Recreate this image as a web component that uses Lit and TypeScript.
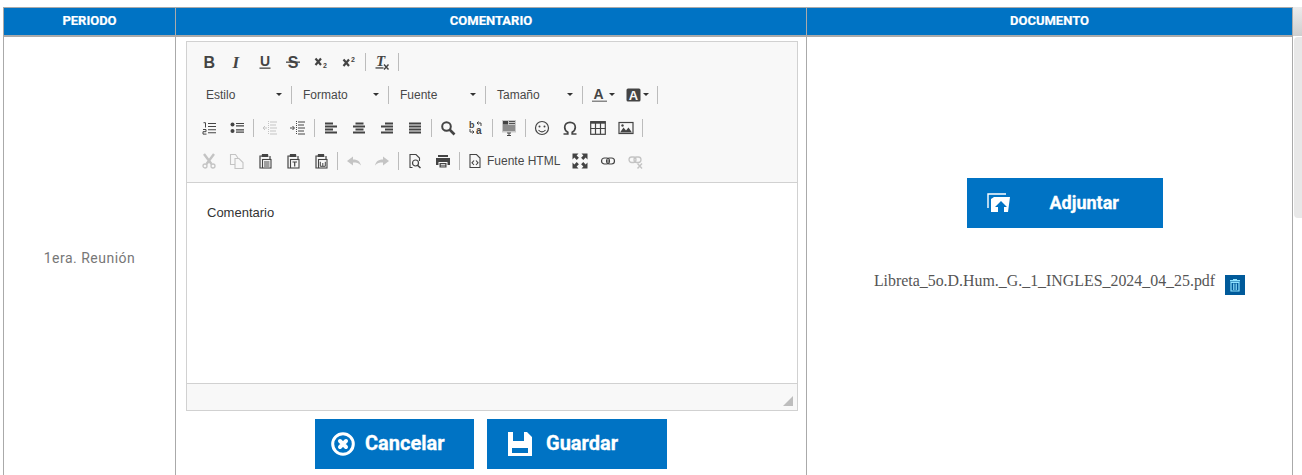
import { LitElement, html, css, svg } from "lit";
import { customElement } from "lit/decorators.js";

const ic = (body: unknown, cls = "") => html`<svg class="ic ${cls}" viewBox="0 0 16 16" width="16" height="16">${body}</svg>`;
const D = "#444";
const L = "#c4c4c4";

const I: Record<string, unknown> = {
  bold: svg`<text x="2.500" y="13.500" font-family="Liberation Sans" font-weight="700" font-size="16" fill="${D}">B</text>`,
  italic: svg`<text x="3.500" y="13.500" font-family="Liberation Serif" font-style="italic" font-weight="700" font-size="17" fill="${D}">I</text>`,
  underline: svg`<text x="3" y="11.500" font-family="Liberation Sans" font-weight="700" font-size="14" fill="${D}">U</text><rect x="2.500" y="13.500" width="11" height="1.300" fill="${D}"/>`,
  strike: svg`<text x="2.800" y="13.500" font-family="Liberation Sans" font-weight="700" font-size="16" fill="${D}">S</text><rect x="1" y="7.500" width="14" height="1.300" fill="${D}"/>`,
  sub: svg`<path d="M2.500 4.500l5.500 6.500M8 4.500l-5.500 6.500" stroke="${D}" stroke-width="2.200"/><text x="10" y="13.500" font-family="Liberation Sans" font-size="7" font-weight="700" fill="${D}">2</text>`,
  sup: svg`<path d="M2.500 5.500l5.500 6.500M8 5.500l-5.500 6.500" stroke="${D}" stroke-width="2.200"/><text x="10" y="7.500" font-family="Liberation Sans" font-size="7" font-weight="700" fill="${D}">2</text>`,
  clear: svg`<text x="2" y="12" font-family="Liberation Serif" font-style="italic" font-weight="700" font-size="15" fill="${D}">T</text><rect x="1.500" y="13.300" width="8" height="1.300" fill="${D}"/><path d="M10 10.500l4.500 5M14.500 10.500l-4.500 5" stroke="${D}" stroke-width="1.400"/>`,
  ol: svg`<path d="M2.500 2.700h2v4.800M2 9.500h3v2.200H2v2.400h3.500" fill="none" stroke="${D}" stroke-width="1"/><path d="M7 3.500h8M7 6.500h8M7 9.800h8M7 12.800h8" stroke="${D}" stroke-width="1.100"/>`,
  ul: svg`<circle cx="3.500" cy="4.500" r="2" fill="${D}"/><circle cx="3.500" cy="11" r="2" fill="${D}"/><path d="M7 3.500h8M7 5.800h8M7 9.800h8M7 12.200h8" stroke="${D}" stroke-width="1.200"/>`,
  outdent: svg`<path d="M6.500 1v14" stroke="${L}" stroke-dasharray="1 1"/><path d="M8 2h7M8 5h6M8 8h7M8 11h6M8 14h7" stroke="${L}"/><path d="M1 8h4M3 6L1 8l2 2" fill="none" stroke="${L}"/>`,
  indent: svg`<path d="M6.500 1v14" stroke="${D}" stroke-dasharray="1 1"/><path d="M8 2h7M8 5h6M8 8h7M8 11h6M8 14h7" stroke="${D}"/><path d="M0 8h4M2.500 6l2 2-2 2" fill="none" stroke="${D}"/>`,
  al: svg`<path d="M2 3.500h8M2 6.500h12M2 9.500h8M2 12.500h12" stroke="${D}" stroke-width="1.800"/>`,
  ac: svg`<path d="M4.500 3.500h8M2 6.500h12M4.500 9.500h8M2 12.500h12" stroke="${D}" stroke-width="1.800"/>`,
  ar: svg`<path d="M6 3.500h8M2 6.500h12M6 9.500h8M2 12.500h12" stroke="${D}" stroke-width="1.800"/>`,
  aj: svg`<path d="M2 3.500h12M2 6.500h12M2 9.500h12M2 12.500h12" stroke="${D}" stroke-width="1.800"/>`,
  find: svg`<circle cx="6.500" cy="6.500" r="4.300" fill="none" stroke="${D}" stroke-width="2"/><path d="M9.500 9.500l5 5" stroke="${D}" stroke-width="2.600"/>`,
  replace: svg`<text x="1" y="7.500" font-family="Liberation Sans" font-weight="700" font-size="9" fill="${D}">b</text><text x="8" y="14" font-family="Liberation Sans" font-weight="700" font-size="10" fill="${D}">a</text><path d="M13 6V3H9M10.500 1.500L9 3l1.500 1.500M2 9v3h4M4.500 10.500L6 12l-1.500 1.500" fill="none" stroke="${D}"/>`,
  block: svg`<rect x="1" y="0" width="14" height="12.500" fill="#c8c8c8"/><path d="M2 1h5v3.500H2z" fill="${D}"/><path d="M8 1.500h6M8 3.500h6M2 6h12M2 8h12M2 10h12" stroke="${D}" stroke-width=".9"/><path d="M6 13h4M8 13v2.500M6 15.500h4" stroke="${D}"/>`,
  smile: svg`<circle cx="8" cy="8" r="6.500" fill="none" stroke="${D}" stroke-width="1.200"/><circle cx="5.500" cy="6.500" r="1" fill="${D}"/><circle cx="10.500" cy="6.500" r="1" fill="${D}"/><path d="M4.500 10c2 2.500 5 2.500 7 0" fill="none" stroke="${D}" stroke-width="1.100"/>`,
  omega: svg`<path d="M1.500 14h4.300v-1.700C3.800 11.200 2.700 9.400 2.700 7.300 2.700 4.300 4.900 2.300 8 2.300s5.300 2 5.300 5c0 2.100-1.100 3.900-3.100 5V14h4.300" fill="none" stroke="${D}" stroke-width="1.700"/>`,
  table: svg`<rect x=".7" y="1.700" width="14.600" height="12.600" fill="none" stroke="${D}" stroke-width="1.200"/><path d="M.7 2.500h14.600" stroke="${D}" stroke-width="2.400"/><path d="M.7 8.500h14.600M5.500 3v11M10.500 3v11" stroke="${D}" stroke-width="1.200"/>`,
  image: svg`<rect x="1" y="2.500" width="14" height="11" fill="none" stroke="${D}" stroke-width="1.200"/><path d="M2 12.500l3.500-5 2.500 3 2.500-3 3.500 5z" fill="${D}"/><circle cx="4.500" cy="5.500" r="1.200" fill="${D}"/>`,
  cut: svg`<path d="M3 1l7.500 10M13 1L5.500 11" stroke="${L}" stroke-width="2.400"/><circle cx="4" cy="13" r="2" fill="none" stroke="${L}" stroke-width="1.300"/><circle cx="12" cy="13" r="2" fill="none" stroke="${L}" stroke-width="1.300"/>`,
  copy: svg`<path d="M6 11.500H1.500v-10h5l2.500 3.500M6 5.500h4l4 4v6H6z" fill="#f8f8f8" stroke="${L}" stroke-width="1.100"/>`,
  paste: svg`<path d="M5 3H3v12h2" fill="none" stroke="${D}" stroke-width="1.200"/><path d="M5 1h6l.5 3h-7z" fill="${D}"/><path d="M13 3v3" stroke="${D}" stroke-width="1.200"/><rect x="5.500" y="6.500" width="8.500" height="8.500" fill="none" stroke="${D}" stroke-width="1.100"/><path d="M7 9h5.500M7 11h5.500M7 13h5.500" stroke="${D}"/>`,
  pasteT: svg`<path d="M5 3H3v12h2" fill="none" stroke="${D}" stroke-width="1.200"/><path d="M5 1h6l.5 3h-7z" fill="${D}"/><path d="M13 3v3" stroke="${D}" stroke-width="1.200"/><rect x="5.500" y="6.500" width="8.500" height="8.500" fill="none" stroke="${D}" stroke-width="1.100"/><path d="M7.500 9h4.500M9.700 9v4.500" stroke="${D}" stroke-width="1.200"/>`,
  pasteW: svg`<path d="M5 3H3v12h2" fill="none" stroke="${D}" stroke-width="1.200"/><path d="M5 1h6l.5 3h-7z" fill="${D}"/><path d="M13 3v3" stroke="${D}" stroke-width="1.200"/><rect x="5.500" y="6.500" width="8.500" height="8.500" fill="none" stroke="${D}" stroke-width="1.100"/><path d="M7.300 8.800v4.500h5V8.800M9.800 10v3" fill="none" stroke="${D}"/>`,
  undo: svg`<path d="M1 8L7 3.500v3c4 0 7 1.500 8 6-2-2.500-4.500-3-8-3v3z" fill="${L}"/>`,
  redo: svg`<path d="M15 8L9 3.500v3c-4 0-7 1.500-8 6 2-2.500 4.500-3 8-3v3z" fill="${L}"/>`,
  preview: svg`<path d="M5.500 14.500H3V1.500h6l3.500 3.500v3" fill="none" stroke="${D}" stroke-width="1.100"/><circle cx="8.500" cy="10" r="3" fill="none" stroke="${D}" stroke-width="1.200"/><path d="M10.500 12.300l3 2.700" stroke="${D}" stroke-width="1.500"/>`,
  print: svg`<path d="M3 2h10v2H3z" fill="${D}"/><path d="M1 5h14v7h-2.500V9h-9v3H1z" fill="${D}"/><path d="M4.500 10h7v4.500h-7z" fill="${D}"/><path d="M5.800 11.500h4.500M5.800 13h4.500" stroke="#f8f8f8" stroke-width=".8"/>`,
  source: svg`<path d="M3 1.500h6.500L13 5v9.500H3z" fill="none" stroke="${D}" stroke-width="1.100"/><path d="M7 7.500L5 9.800 7 12M9 7.500l2 2.300L9 12" fill="none" stroke="${D}" stroke-width="1.100"/>`,
  max: svg`<path d="M.5.500h6L4.600 2.400l2.300 2.300-2.200 2.200-2.300-2.300L.5 6.500zM15.500.500v6l-1.900-1.900-2.300 2.300-2.200-2.200 2.300-2.300L9.500.500zM.5 15.500v-6l1.900 1.900 2.300-2.300 2.200 2.200-2.300 2.300 1.900 1.900zM15.500 15.500h-6l1.900-1.900-2.300-2.300 2.200-2.200 2.300 2.300 1.900-1.900z" fill="${D}"/>`,
  link: svg`<rect x="1.500" y="5" width="8" height="6" rx="3" fill="none" stroke="${D}" stroke-width="1.200"/><rect x="6.500" y="5" width="8" height="6" rx="3" fill="none" stroke="${D}" stroke-width="1.200"/><path d="M6 8h4" stroke="${D}" stroke-width=".9"/>`,
  unlink: svg`<rect x="1" y="4" width="7" height="5.500" rx="2.700" fill="none" stroke="${L}" stroke-width="1.300"/><rect x="6" y="4" width="7" height="5.500" rx="2.700" fill="none" stroke="${L}" stroke-width="1.300"/><path d="M9.500 10.500l4.500 5M14 10.500l-4.500 5" stroke="${L}" stroke-width="1.400"/>`,
};

const sep = html`<span class="sep"></span>`;
const btn = (n: string) => html`<span class="btn">${ic(I[n])}</span>`;
const combo = (label: string) => html`<span class="combo"><span>${label}</span><i class="caret"></i></span>`;

@customElement("app-root")
export class AppRoot extends LitElement {
  static styles = css`
    :host { display: block; width: 1302px; height: 475px; overflow: hidden; position: relative; background: #fff; font-family: "Liberation Sans", Arial, sans-serif; }
    .page { padding: 7px 9px 0 3px; box-sizing: border-box; height: 475px; }
    .grid { display: grid; grid-template-columns: 172px 631px 486px; border-left: 1px solid #aaa; border-top: 1px solid #aaa; height: 468px; grid-template-rows: 29px 1fr; box-sizing: border-box; width: 1290px; }
    .th { background: #0073c4; color: #fff; font-family: Roboto, sans-serif; font-weight: 700; font-size: 13px; text-align: center; line-height: 26px; border-right: 1px solid #aaa; border-bottom: 2px solid #aaa; box-sizing: border-box; -webkit-text-stroke: .2px #fff; }
    .td { border-right: 1px solid #aaa; box-sizing: border-box; }
    .periodo { display: flex; align-items: center; justify-content: center; color: #777; font-family: Roboto, sans-serif; font-size: 14px; letter-spacing: .5px; height: 442px; }
    .mid { padding: 4px 8px 0 10px; }
    .ed { border: 1px solid #d1d1d1; width: 612px; height: 370px; box-sizing: border-box; display: flex; flex-direction: column; background: #fff; }
    .tb { height: 141px; background: #f8f8f8; border-bottom: 1px solid #d1d1d1; box-sizing: border-box; padding: 3px 0 0 8px; display: flex; flex-direction: column; flex: none; }
    .row { height: 33px; display: flex; align-items: center; }
    .row.r2 { padding-left: 2px; }
    .btn { width: 28px; height: 28px; display: inline-flex; align-items: center; justify-content: center; flex: none; }
    .ic { display: block; overflow: visible; }
    .sep { width: 1px; height: 18px; background: #bcbcbc; flex: none; margin: 0 2px; }
    .combo { display: inline-flex; align-items: center; justify-content: space-between; padding: 0 7px 0 9px; box-sizing: border-box; width: 92px; height: 24px; color: #484848; font-size: 12px; flex: none; }
    .caret { width: 0; height: 0; border: 3px solid transparent; border-top-color: #333; border-bottom: 0; flex: none; }
    .color { display: inline-flex; align-items: center; flex: none; box-sizing: border-box; }
    .color.fg { width: 35px; padding-left: 6px; gap: 2px; }
    .color.bg { width: 36px; padding-left: 6px; gap: 2px; margin-left: -1px; }
    .txtbtn { display: inline-flex; align-items: center; gap: 4px; color: #484848; font-size: 12px; flex: none; padding: 0 6px 0 5px; }
    .body { flex: 1; padding: 22px 20px; font-size: 13px; color: #333; line-height: 16px; }
    .foot { height: 27px; background: #f8f8f8; border-top: 1px solid #d1d1d1; position: relative; box-sizing: border-box; flex: none; }
    .grip { position: absolute; right: 4px; bottom: 4px; width: 0; height: 0; border-style: solid; border-width: 0 0 10px 10px; border-color: transparent transparent #bdbdbd transparent; }
    .actions { display: flex; gap: 13px; padding: 8px 0 0 129px; }
    .b { background: #0073c4; color: #fff; height: 50px; display: flex; align-items: center; font-family: Roboto, sans-serif; font-weight: 700; font-size: 20px; box-sizing: border-box; -webkit-text-stroke: .3px #fff; }
    .b span { position: relative; top: -1px; }
    .cancel { width: 159px; padding-left: 16px; gap: 10px; }
    .save { width: 180px; padding-left: 21px; gap: 14px; }
    .right { display: flex; flex-direction: column; align-items: center; padding-top: 141px; }
    .attach { width: 196px; padding-left: 20px; margin-left: 30px; font-size: 18px; gap: 39px; }
    .file { display: flex; align-items: flex-start; margin-top: 44px; margin-left: 20px; font-family: "Liberation Serif", serif; font-size: 15.9px; line-height: 18px; color: #555; gap: 10px; white-space: nowrap; }
    .trash { width: 20px; height: 20px; background: #005a9a; display: flex; align-items: center; justify-content: center; margin-top: 3px; }
    .sb { position: absolute; right: 0; top: 7px; width: 9px; bottom: 0; background: #fff; }
    .sb .hd { height: 29px; background: linear-gradient(#ececec, #cfcfcf); }
    .sb .th2 { position: absolute; top: 30px; left: 1px; right: 0; height: 181px; background: #e8e8e8; border-radius: 4px 0 0 4px; }
  `;

  render() {
    return html`
      <div class="page">
        <div class="grid">
          <div class="th">PERIODO</div>
          <div class="th">COMENTARIO</div>
          <div class="th">DOCUMENTO</div>
          <div class="td periodo">1era. Reunión</div>
          <div class="td mid">
            <div class="ed">
              <div class="tb">
                <div class="row">
                  ${btn("bold")}${btn("italic")}${btn("underline")}${btn("strike")}${btn("sub")}${btn("sup")}${sep}${btn("clear")}${sep}
                </div>
                <div class="row r2">
                  ${combo("Estilo")}${sep}${combo("Formato")}${sep}${combo("Fuente")}${sep}${combo("Tamaño")}${sep}
                  <span class="color fg">
                    <svg viewBox="0 0 16 16" width="16" height="16"><text x="2.500" y="12" font-family="Liberation Sans" font-weight="700" font-size="14" fill="${D}">A</text><rect x="1" y="13.500" width="15" height="1.500" fill="#888"/></svg>
                    <i class="caret"></i>
                  </span>
                  <span class="color bg">
                    <svg viewBox="0 0 16 16" width="16" height="16"><rect x="1.500" y="1.500" width="14" height="13" rx="1.500" fill="${D}"/><text x="3.800" y="12.500" font-family="Liberation Sans" font-weight="700" font-size="13" fill="#f8f8f8">A</text></svg>
                    <i class="caret"></i>
                  </span>
                  ${sep}
                </div>
                <div class="row">
                  ${btn("ol")}${btn("ul")}${sep}${btn("outdent")}${btn("indent")}${sep}${btn("al")}${btn("ac")}${btn("ar")}${btn("aj")}${sep}${btn("find")}${btn("replace")}${sep}${btn("block")}${sep}${btn("smile")}${btn("omega")}${btn("table")}${btn("image")}${sep}
                </div>
                <div class="row">
                  ${btn("cut")}${btn("copy")}${btn("paste")}${btn("pasteT")}${btn("pasteW")}${sep}${btn("undo")}${btn("redo")}${sep}${btn("preview")}${btn("print")}${sep}
                  <span class="txtbtn">${ic(I.source)}<span>Fuente HTML</span></span>
                  ${btn("max")}${btn("link")}${btn("unlink")}
                </div>
              </div>
              <div class="body">Comentario</div>
              <div class="foot"><i class="grip"></i></div>
            </div>
            <div class="actions">
              <div class="b cancel">
                <svg viewBox="0 0 24 24" width="24" height="24"><circle cx="12" cy="12" r="10.300" fill="none" stroke="#fff" stroke-width="3"/><path d="M9 9l6 6M15 9l-6 6" stroke="#fff" stroke-width="4" stroke-linecap="round"/></svg>
                <span>Cancelar</span>
              </div>
              <div class="b save">
                <svg viewBox="0 0 24 24" width="24" height="24"><path fill-rule="evenodd" fill="#fff" d="M0 0h19l5 5v19H0zM5 0v9h11V0zM4 16v5h16v-5z"/></svg>
                <span>Guardar</span>
              </div>
            </div>
          </div>
          <div class="td right">
            <div class="b attach">
              <svg viewBox="0 0 24 20" width="24" height="20"><path d="M1 15V1h18" fill="none" stroke="#fff" stroke-width="1.400"/><path d="M4 19V6l3-2h16l-2 15h-4v-5h3l-6-6-6 6h3v5z" fill="#fff"/></svg>
              <span>Adjuntar</span>
            </div>
            <div class="file">
              <span>Libreta_5o.D.Hum._G._1_INGLES_2024_04_25.pdf</span>
              <span class="trash"><svg viewBox="0 0 12 14" width="12" height="14"><path d="M4 1h4v1h3v1.500H1V2h3z" fill="#8fe3ff"/><path d="M2 4.500h8V13H2z" fill="none" stroke="#8fe3ff" stroke-width="1.200"/><path d="M4.500 5.500v6.500M6 5.500v6.500M7.500 5.500v6.500" stroke="#8fe3ff" stroke-width=".8"/></svg></span>
            </div>
          </div>
        </div>
      </div>
      <div class="sb"><div class="hd"></div><div class="th2"></div></div>
    `;
  }
}
